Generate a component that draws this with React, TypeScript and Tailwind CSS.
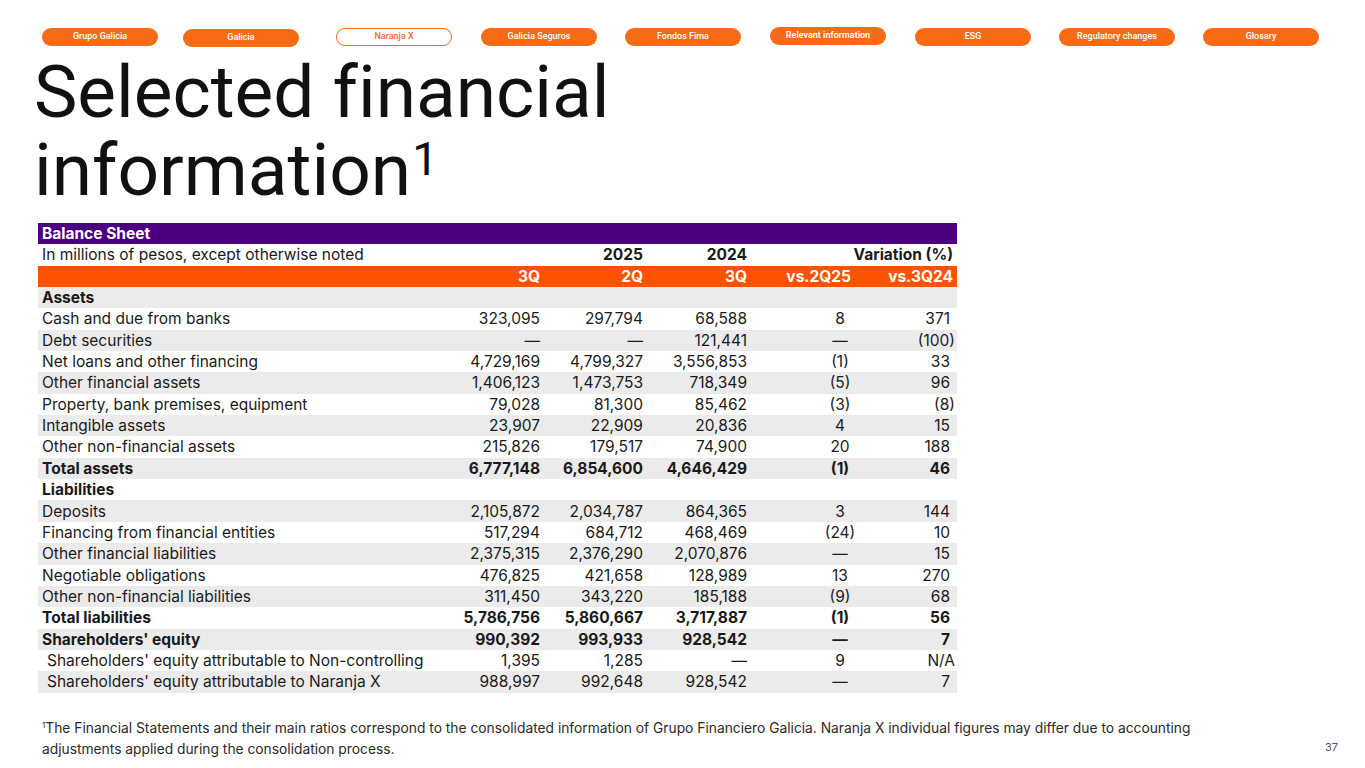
import React from 'react';

type Row = {
  label: string;
  values?: string[];
  bold?: boolean;
  indent?: boolean;
};

const navItems = [
  { label: 'Grupo Galicia', className: 'ml-[42px]' },
  { label: 'Galicia', className: 'ml-[25px] mt-[1px]' },
  { label: 'Naranja X', className: 'ml-[37px]', active: true },
  { label: 'Galicia Seguros', className: 'ml-[29px]' },
  { label: 'Fondos Fima', className: 'ml-[28px]' },
  { label: 'Relevant information', className: 'ml-[29px] -mt-[1px] font-semibold', strong: true },
  { label: 'ESG', className: 'ml-[29px]' },
  { label: 'Regulatory changes', className: 'ml-[28px]' },
  { label: 'Glosary', className: 'ml-[28px]' },
];

const rows: Row[] = [
  { label: 'Assets', bold: true },
  { label: 'Cash and due from banks', values: ['323,095', '297,794', '68,588', '8', '371'] },
  { label: 'Debt securities', values: ['—', '—', '121,441', '—', '(100)'] },
  { label: 'Net loans and other financing', values: ['4,729,169', '4,799,327', '3,556,853', '(1)', '33'] },
  { label: 'Other financial assets', values: ['1,406,123', '1,473,753', '718,349', '(5)', '96'] },
  { label: 'Property, bank premises, equipment', values: ['79,028', '81,300', '85,462', '(3)', '(8)'] },
  { label: 'Intangible assets', values: ['23,907', '22,909', '20,836', '4', '15'] },
  { label: 'Other non-financial assets', values: ['215,826', '179,517', '74,900', '20', '188'] },
  { label: 'Total assets', bold: true, values: ['6,777,148', '6,854,600', '4,646,429', '(1)', '46'] },
  { label: 'Liabilities', bold: true },
  { label: 'Deposits', values: ['2,105,872', '2,034,787', '864,365', '3', '144'] },
  { label: 'Financing from financial entities', values: ['517,294', '684,712', '468,469', '(24)', '10'] },
  { label: 'Other financial liabilities', values: ['2,375,315', '2,376,290', '2,070,876', '—', '15'] },
  { label: 'Negotiable obligations', values: ['476,825', '421,658', '128,989', '13', '270'] },
  { label: 'Other non-financial liabilities', values: ['311,450', '343,220', '185,188', '(9)', '68'] },
  { label: 'Total liabilities', bold: true, values: ['5,786,756', '5,860,667', '3,717,887', '(1)', '56'] },
  { label: "Shareholders' equity", bold: true, values: ['990,392', '993,933', '928,542', '—', '7'] },
  { label: "Shareholders' equity attributable to Non-controlling", indent: true, values: ['1,395', '1,285', '—', '9', 'N/A'] },
  { label: "Shareholders' equity attributable to Naranja X", indent: true, values: ['988,997', '992,648', '928,542', '—', '7'] },
];

const font = { fontFamily: 'Inter, "Noto Sans", sans-serif' };

function DataRow({ row, shaded }: { row: Row; shaded: boolean }) {
  const v = row.values;
  const padLast = v && /^\d+$/.test(v[4]);
  return (
    <div
      className={`flex h-[21.35px] items-center text-[15.5px] text-[#1a1a1a] ${shaded ? 'bg-[#ebebeb]' : 'bg-white'} ${row.bold ? 'font-bold' : ''}`}
    >
      <div className={`w-[404px] truncate ${row.indent ? 'pl-[9px]' : 'pl-[4px]'}`}>{row.label}</div>
      {v && (
        <>
          <div className="w-[100px] pr-[2px] text-right">{v[0]}</div>
          <div className="w-[103px] pr-[2px] text-right">{v[1]}</div>
          <div className="w-[104px] pr-[2px] text-right">{v[2]}</div>
          <div className="flex w-[111px] justify-end">
            <span className="inline-block w-[40px] text-center">{v[3]}</span>
          </div>
          <div className={`w-[97px] text-right ${padLast ? 'pr-[7px]' : 'pr-[2px]'}`}>{v[4]}</div>
        </>
      )}
    </div>
  );
}

export default function App() {
  return (
    <div className="relative h-[768px] w-[1365px] overflow-hidden bg-white" style={font}>
      {/* Section nav */}
      <div className="flex pt-[28px]" style={{ fontFamily: 'Roboto, "Liberation Sans", sans-serif' }}>
        {navItems.map((item) => (
          <div
            key={item.label}
            className={`flex h-[18px] w-[116px] items-center justify-center rounded-full text-[9px] ${item.className} ${
              item.active
                ? 'border border-[#f26a1d] bg-white text-[#f26a1d]'
                : 'bg-[#f86b16] text-white'
            } ${item.strong ? '' : 'font-medium'}`}
          >
            {item.label}
          </div>
        ))}
      </div>

      {/* Title */}
      <h1
        className="ml-[34px] mt-[6px] text-[73px] leading-[78px] text-[#111] [font-variant-ligatures:none]"
        style={{ fontFamily: 'Roboto, Inter, sans-serif' }}
      >
        Selected financial
        <br />
        information<span className="relative -top-[20px] ml-[1px] align-baseline text-[46px] leading-none">1</span>
      </h1>

      {/* Table */}
      <div className="ml-[38px] mt-[14px] w-[919px]">
        <div className="flex h-[21.35px] items-center bg-[#4b0080] pl-[4px] text-[15.5px] font-bold text-white">
          Balance Sheet
        </div>
        <div className="flex h-[21.35px] items-center bg-white text-[15.5px] text-[#1a1a1a]">
          <div className="w-[404px] pl-[4px]">In millions of pesos, except otherwise noted</div>
          <div className="w-[100px]" />
          <div className="w-[103px] pr-[2px] text-right font-bold">2025</div>
          <div className="w-[104px] pr-[2px] text-right font-bold">2024</div>
          <div className="w-[208px] pr-[4px] text-right font-bold">Variation (%)</div>
        </div>
        <div className="flex h-[21.35px] items-center bg-[#ff5200] text-[15.5px] font-bold text-white">
          <div className="w-[404px]" />
          <div className="w-[100px] pr-[2px] text-right">3Q</div>
          <div className="w-[103px] pr-[2px] text-right">2Q</div>
          <div className="w-[104px] pr-[2px] text-right">3Q</div>
          <div className="w-[111px] pr-[9px] text-right">vs.2Q25</div>
          <div className="w-[97px] pr-[4px] text-right">vs.3Q24</div>
        </div>
        {rows.map((row, i) => (
          <DataRow key={row.label} row={row} shaded={i % 2 === 0} />
        ))}
      </div>

      {/* Footnote */}
      <div className="ml-[42px] mt-[25px] flex items-start justify-between pr-[27px]">
        <p className="w-[1200px] text-[13.8px] leading-[21px] text-[#2a2a2a]">
          <span className="relative -top-[5px] text-[8px] leading-none">1</span>The Financial Statements and their main
          ratios correspond to the consolidated information of Grupo Financiero Galicia. Naranja X individual figures may
          differ due to accounting adjustments applied during the consolidation process.
        </p>
        <span className="mt-[21px] text-[11px] text-[#555]">37</span>
      </div>
    </div>
  );
}
